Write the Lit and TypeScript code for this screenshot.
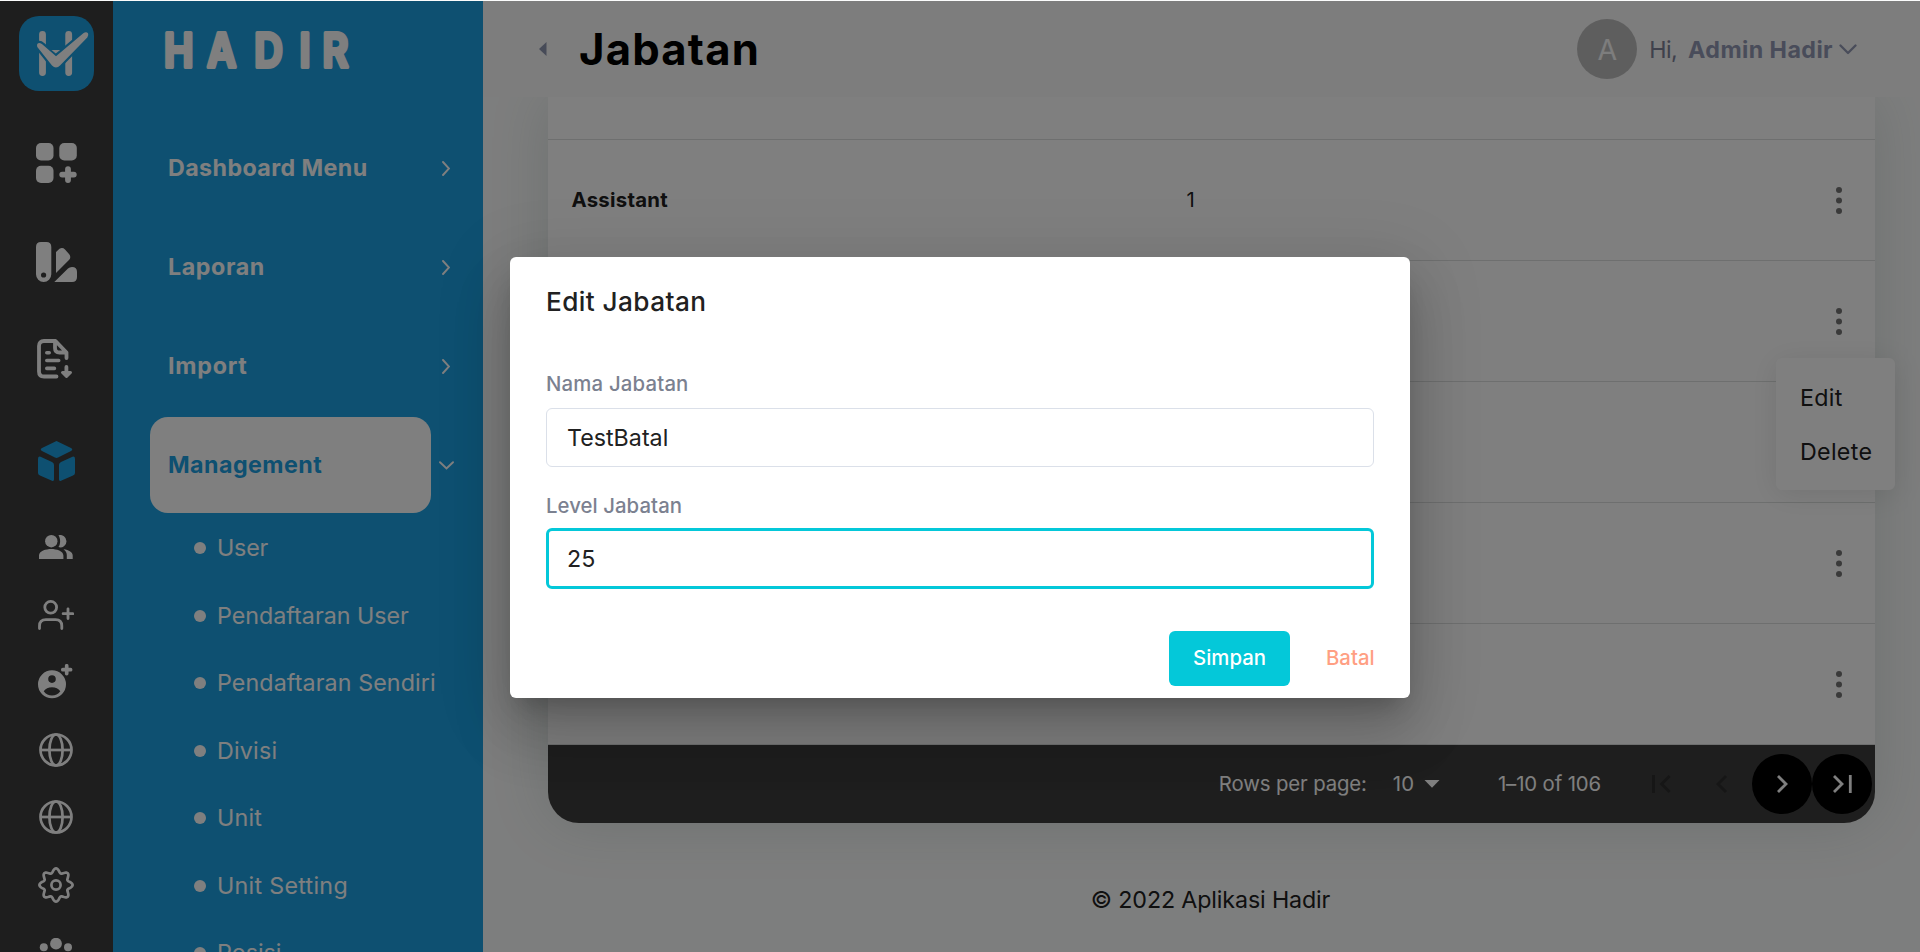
import { LitElement, html, css, svg, TemplateResult } from "lit";
import { customElement, property } from "lit/decorators.js";
import { classMap } from "lit/directives/class-map.js";

const gearPath = (() => {
  const pts: string[] = [];
  for (let i = 0; i < 160; i++) {
    const a = (i / 160) * Math.PI * 2;
    const r = 14.5 + 2.1 * Math.cos(8 * a);
    pts.push(`${(18 + r * Math.sin(a)).toFixed(2)} ${(18 - r * Math.cos(a)).toFixed(2)}`);
  }
  return `M${pts.join("L")}Z`;
})();

const globe = svg`<g fill="none" stroke="currentColor" stroke-width="2.7"><circle cx="17" cy="17" r="15.5"/><ellipse cx="17" cy="17" rx="6.6" ry="15.5"/><path d="M1.5 17h31"/></g>`;

const icons: Record<string, { w: number; h: number; body: TemplateResult }> = {
  logo: { w: 75, h: 75, body: svg`<rect width="75" height="75" rx="20" fill="#1ca1e3"/>
    <path d="M23.5 18.5V56.5M49.7 18.5V56.5" stroke="#fff" stroke-width="6.8" stroke-linecap="round"/>
    <path d="M18.3 31Q17.2 27 20.5 27Q22 27 23.5 28.5L37 40.3L64.3 17.3Q67.3 15.3 69 17.3Q70 19.5 68.3 21.5L41 49.5Q37 53.5 33 49.5Z" fill="#fff" stroke="#1ca1e3" stroke-width="4.4" paint-order="stroke"/>
    <path d="M32.500 34h8.600L36.800 37.400Z" fill="#fff"/>` },
  grid: { w: 41, h: 40, body: svg`<g fill="currentColor"><rect width="17.5" height="17.5" rx="5"/><rect x="23.3" width="17.5" height="17.5" rx="5"/><rect y="22.7" width="17.5" height="17.3" rx="5"/></g><path d="M32 26.2v10.8M26.2 31.6h11.6" stroke="currentColor" stroke-width="5.8" stroke-linecap="round"/>` },
  palette: { w: 41, h: 40, body: svg`<path fill="currentColor" fill-rule="evenodd" d="M5 0h5.3q5 0 5 5v27.3a7.65 7.65 0 0 1-15.3 0V5q0-5 5-5ZM7.6 30.4a2.6 2.6 0 1 0 0 5.2a2.6 2.6 0 0 0 0-5.2Z"/><path fill="currentColor" d="M20 10V31L33.2 17.8Q35.5 15 33 12L29 7.5Q26.5 5 23.5 6.8ZM18.3 40L32 26.5Q33.5 25 36 25Q41 25 41 30V35Q41 40 36 40Z"/>` },
  doc: { w: 39, h: 44, body: svg`<g fill="none" stroke="currentColor" stroke-width="3.8" stroke-linecap="round" stroke-linejoin="round"><path d="M29.5 19V13.5L18.5 2H7Q2 2 2 7V32.5Q2 37.5 7 37.5H19.5M18 2.5V9Q18 13.5 22.500 13.5H29"/><path stroke-width="3.6" d="M9.800 13.800h2.400M9.800 21.500h11.900M9.800 29.400h7.600"/></g><path d="M29.400 28v8" stroke="currentColor" stroke-width="3.800" stroke-linecap="round"/><path d="M25.500 33.500h8L29.500 37.500Z" fill="currentColor" stroke="currentColor" stroke-width="3" stroke-linejoin="round"/>` },
  cube: { w: 37, h: 40, body: svg`<path fill="currentColor" d="M18.500 0L33 7Q35.500 8.500 33 10L20 16.600Q18.500 17.300 17 16.600L4 10Q1.500 8.500 4 7ZM2.500 15.700L14 21Q16 22 16 24V38.500Q16 40.500 14 39.800L2 34.500Q0 33.500 0 32V18Q0 15 2.500 15.700ZM34.500 15.700L23 21Q21 22 21 24V38.500Q21 40.500 23 39.800L35 34.500Q37 33.500 37 32V18Q37 15 34.500 15.700Z"/>` },
  people: { w: 34, h: 24, body: svg`<g fill="currentColor"><circle cx="12.300" cy="6.200" r="6.200"/><path d="M19.400 .3A6.200 6.200 0 1 1 19.400 12.100C21.700 9 21.700 3.400 19.400 .3ZM0 24V20.500C0 16 7 14 12.200 14S24.400 16 24.400 20.500V24ZM24.500 14.300C30 15 33.700 17.500 33.700 20.500V24H27.800V20C27.800 17.700 26.500 15.700 24.500 14.300Z"/></g>` },
  userPlus: { w: 36, h: 30, body: svg`<g fill="none" stroke="currentColor" stroke-width="2.800"><circle cx="12.700" cy="7.300" r="5.900"/><path stroke-linecap="round" d="M1.500 28.500V26Q1.500 19.700 8 19.700H17.500Q23.800 19.700 23.800 26V28.500M30 8.800V18.600M25.100 13.700H34.900"/></g>` },
  circlePlus: { w: 36, h: 36, body: svg`<path fill="currentColor" fill-rule="evenodd" d="M14 6.300a14 14 0 1 0 0 28a14 14 0 0 0 0-28ZM14 11.300a3.800 3.800 0 1 1 0 7.600a3.800 3.800 0 0 1 0-7.600ZM5.700 27.200Q8.500 23.200 14 23.200T22.300 27.200Q19 31.500 14 31.500T5.700 27.200Z"/><path d="M28.700 1.800v7.800M24.800 5.700h7.800" stroke="currentColor" stroke-width="3.700" stroke-linecap="round"/>` },
  globe: { w: 34, h: 34, body: globe },
  gear: { w: 36, h: 36, body: svg`<path d=${gearPath} fill="none" stroke="currentColor" stroke-width="2.700"/><circle cx="18" cy="18" r="4.600" fill="none" stroke="currentColor" stroke-width="2.700"/>` },
  groups: { w: 34, h: 28, body: svg`<g fill="currentColor"><circle cx="17" cy="5.700" r="5.900"/><circle cx="4.800" cy="9.300" r="4"/><circle cx="29" cy="9.300" r="4"/><path d="M7 26q0-9 10-9t10 9Z"/></g>` },
  right: { w: 8, h: 15, body: svg`<path d="M1 1L7 7.500L1 14" fill="none" stroke="currentColor" stroke-width="1.900" stroke-linecap="round"/>` },
  down: { w: 15, h: 9, body: svg`<path d="M1 1.200L7.500 7.500L14 1.200" fill="none" stroke="currentColor" stroke-width="1.900" stroke-linecap="round"/>` },
  downBold: { w: 18, h: 11, body: svg`<path d="M1.500 1.500L9 9L16.500 1.500" fill="none" stroke="currentColor" stroke-width="2.300" stroke-linecap="round" stroke-linejoin="round"/>` },
  back: { w: 8, h: 14, body: svg`<path d="M7.500 0V14L0 7Z" fill="currentColor"/>` },
  kebab: { w: 6, h: 27, body: svg`<g fill="currentColor"><circle cx="3" cy="3" r="3"/><circle cx="3" cy="13.500" r="3"/><circle cx="3" cy="24" r="3"/></g>` },
  caret: { w: 16, h: 8, body: svg`<path d="M.5 0H15.500L8 7.700Z" fill="currentColor"/>` },
  first: { w: 19, h: 18, body: svg`<path d="M1.500 0V18M17.600 1L9.600 9L17.600 17" fill="none" stroke="currentColor" stroke-width="2.800"/>` },
  prev: { w: 11, h: 18, body: svg`<path d="M10 1L2 9L10 17" fill="none" stroke="currentColor" stroke-width="2.800"/>` },
  next: { w: 11, h: 18, body: svg`<path d="M1 1L9 9L1 17" fill="none" stroke="currentColor" stroke-width="2.800"/>` },
  last: { w: 19, h: 18, body: svg`<path d="M17.300 0V18M1 1L9 9L1 17" fill="none" stroke="currentColor" stroke-width="2.800"/>` },
};

@customElement("ui-icon")
class UiIcon extends LitElement {
  @property() name = "";
  static styles = css`
    :host { display: inline-flex; flex: none; }
    svg { display: block; }
  `;
  render() {
    const i = icons[this.name];
    return html`<svg width=${i.w} height=${i.h} viewBox="0 0 ${i.w} ${i.h}" fill="none">${i.body}</svg>`;
  }
}

const track = (v: number) => `letter-spacing:${v}px`;

@customElement("side-nav")
class SideNav extends LitElement {
  static styles = css`
    :host { display: flex; flex: none; height: 951px; overflow: hidden; color: #fff; }
    .rail { width: 113px; background: #3c3c3c; display: flex; flex-direction: column; align-items: center; flex: none; padding-right: 1px; box-sizing: border-box; }
    .logo { height: 112.5px; padding: 15px 0 0 1px; box-sizing: border-box; flex: none; }
    .big, .small { display: flex; align-items: center; justify-content: center; flex: none; }
    .big { height: 99px; padding-left: 1px; }
    .small { height: 67.5px; }
    .cube { color: #1ca1e3; height: 103px; box-sizing: border-box; padding-bottom: 3px; }
    .panel { width: 370px; background: #1ca1e3; flex: none; }
    .brand { height: 117.5px; display: block; }
    .brand text { font: 600 46.5px Inter, sans-serif; fill: #fff; stroke: #fff; stroke-width: 4.2px; stroke-linejoin: round; transform: scaleX(.85); }
    .item { height: 99px; display: flex; align-items: center; padding-left: 37px; font-weight: 700; font-size: 23.25px; }
    .label { width: 281px; height: 96px; line-height: 96px; padding-left: 18px; box-sizing: border-box; border-radius: 18px; }
    .active { background: #fff; color: #1ca1e3; }
    .chev { width: 30px; display: flex; justify-content: center; }
    .sub { height: 67.5px; display: flex; align-items: center; padding-left: 81px; gap: 11px; font-size: 23.25px; line-height: 30px; }
    .sub-text { padding-bottom: .5px; }
    .dot { width: 12px; height: 12px; border-radius: 50%; background: #fff; }
  `;
  render() {
    const menu: [string, number, boolean][] = [["Dashboard Menu", 0.4, false], ["Laporan", 0.6, false], ["Import", 0.75, false], ["Management", 0.44, true]];
    const subs: [string, number][] = [["User", -0.2], ["Pendaftaran User", 0], ["Pendaftaran Sendiri", 0.1], ["Divisi", 0.2], ["Unit", 0.2], ["Unit Setting", 0.28], ["Posisi", 0]];
    return html`
      <div class="rail">
        <div class="logo"><ui-icon name="logo"></ui-icon></div>
        ${["grid", "palette", "doc"].map((n) => html`<div class="big"><ui-icon name=${n}></ui-icon></div>`)}
        <div class="big cube"><ui-icon name="cube"></ui-icon></div>
        ${["people", "userPlus", "circlePlus", "globe", "globe", "gear", "groups"].map((n) => html`<div class="small"><ui-icon name=${n}></ui-icon></div>`)}
      </div>
      <div class="panel">
        <svg class="brand" width="370" height="117.5"><text x="60 111 166.200 219.500 246.500" y="66.300">HADIR</text></svg>
        ${menu.map(([t, ls, on]) => html`<div class="item"><div class=${classMap({ label: true, active: on })} style=${track(ls)}>${t}</div><div class="chev"><ui-icon name=${on ? "down" : "right"}></ui-icon></div></div>`)}
        ${subs.map(([t, ls]) => html`<div class="sub"><span class="dot"></span><span class="sub-text" style=${track(ls)}>${t}</span></div>`)}
      </div>`;
  }
}

@customElement("edit-dialog")
class EditDialog extends LitElement {
  static styles = css`
    :host { display: block; box-sizing: border-box; width: 900px; height: 441px; padding: 0 36px; background: #fff; border-radius: 6px; color: #212121;
      box-shadow: 0 16px 22px -10px rgba(0,0,0,.2), 0 36px 57px 4px rgba(0,0,0,.14), 0 13px 69px 12px rgba(0,0,0,.1); }
    .title { font-size: 26.2px; font-weight: 500; line-height: 89px; letter-spacing: .42px; }
    .label { font-size: 20.35px; font-weight: 450; line-height: 32px; margin: 22px 0 8px; color: #7b8190; letter-spacing: .18px; }
    .second { margin: 23px 0 6px; letter-spacing: .06px; }
    .field { box-sizing: border-box; height: 59px; border: 1px solid #dbe0e9; border-radius: 6px; padding-left: 20px; font-size: 23.25px; line-height: 57px; }
    .focus { height: 61px; border: 3px solid #04c8d9; padding-left: 18px; line-height: 55px; }
    .actions { display: flex; justify-content: flex-end; align-items: center; gap: 36px; margin-top: 42px; font-size: 20.35px; font-weight: 450; line-height: 54px; }
    .save { width: 121px; padding-bottom: 1px; text-align: center; background: #04c8d9; color: #fff; border-radius: 6px; }
    .cancel { width: 48px; padding-bottom: 1px; color: #ff9f83; letter-spacing: 0; }
  `;
  render() {
    return html`
      <div class="title">Edit Jabatan</div>
      <div class="label">Nama Jabatan</div>
      <div class="field">TestBatal</div>
      <div class="label second">Level Jabatan</div>
      <div class="field focus">25</div>
      <div class="actions"><span class="save">Simpan</span><span class="cancel">Batal</span></div>`;
  }
}

@customElement("app-root")
class AppRoot extends LitElement {
  static styles = css`
    :host { display: flex; position: relative; width: 1920px; height: 952px; box-sizing: border-box; padding-top: 1px; overflow: hidden; background: #fbfcfc; font-family: Inter, "Liberation Sans", sans-serif; color: #212121; }
    .main { flex: 1; display: flex; flex-direction: column; min-width: 0; }
    header { height: 96px; flex: none; display: flex; align-items: center; padding: 0 63px 0 56px; background: #fafafa; z-index: 1; }
    .back { color: #8f97b0; }
    h1 { margin: 0 auto 0 32px; padding-top: 2px; font-size: 43.6px; font-weight: 700; letter-spacing: 1.2px; color: #000; line-height: 1; }
    .avatar { width: 60px; height: 60px; border-radius: 50%; background: #bdbdbd; color: #fafafa; font-size: 28.5px; line-height: 62px; text-align: center; margin-right: 12px; }
    .hi { color: #7e8299; font-size: 23.25px; font-weight: 400; letter-spacing: -.6px; margin-right: 11px; padding-top: 1px; }
    .name { color: #9299b4; font-size: 23.25px; font-weight: 700; letter-spacing: .42px; margin-right: 6px; padding-top: 1px; }
    .user { display: flex; align-items: center; color: #9299b4; }
    .card { margin: 0 45px 0 65px; background: #fff; border-radius: 0 0 31px 31px; box-shadow: 0 0 60px rgba(40,80,65,.15); }
    .row { box-sizing: border-box; height: 121px; border-bottom: 1px solid #dcdfde; display: grid; grid-template-columns: 638.5px 1fr 39px; align-items: center; font-size: 20.35px; }
    .row.cut { height: 43px; }
    .row b, .row span { padding-bottom: 1px; }
    .row b { padding-left: 23.500px; letter-spacing: .25px; }
    .row ui-icon { color: #757575; }
    .pager { height: 78px; background: #3c3c3c; color: #fff; border-radius: 0 0 31px 31px; display: flex; align-items: center; justify-content: flex-end; padding-right: 3px; font-size: 20.35px; }
    .pager .rpp, .pager .ten, .pager .range { padding-bottom: 1px; }
    .rpp { letter-spacing: -.12px; margin-right: 26px; }
    .ten { margin-right: 10px; }
    .range { margin: 0 51px 0 58px; letter-spacing: -.13px; }
    .off { color: #2c2c2c; }
    .first { margin-right: 45px; }
    .prev { margin-right: 25px; }
    .btn { width: 60px; height: 60px; border-radius: 50%; background: #000; display: flex; align-items: center; justify-content: center; }
    footer { text-align: center; font-size: 23.25px; line-height: 30px; letter-spacing: -.14px; margin-top: 62px; padding-left: 18px; }
    .menu { position: absolute; left: 1776px; top: 358px; width: 119px; height: 132px; box-sizing: border-box; padding: 13px 0 11px 24px; background: #fff; border-radius: 6px; box-shadow: 0 4px 30px rgba(0,0,0,.1); font-size: 23.25px; line-height: 54px; letter-spacing: .3px; }
    .scrim { position: absolute; inset: 1px 0 0 0; background: rgba(0,0,0,.5); z-index: 2; display: flex; justify-content: center; align-items: flex-start; padding-top: 256px; }
  `;
  render() {
    return html`
      <side-nav></side-nav>
      <div class="main">
        <header>
          <ui-icon class="back" name="back"></ui-icon>
          <h1>Jabatan</h1>
          <div class="user"><div class="avatar">A</div><span class="hi">Hi,</span><span class="name">Admin Hadir</span><ui-icon name="downBold"></ui-icon></div>
        </header>
        <div class="card">
          <div class="row cut"></div>
          ${[["Assistant", "1"], ["", ""], ["", ""], ["", ""], ["", ""]].map(([n, l]) => html`<div class="row"><b>${n}</b><span>${l}</span><ui-icon name="kebab"></ui-icon></div>`)}
          <div class="pager">
            <span class="rpp">Rows per page:</span><span class="ten">10</span><ui-icon name="caret"></ui-icon>
            <span class="range">1–10 of 106</span>
            <ui-icon class="off first" name="first"></ui-icon><ui-icon class="off prev" name="prev"></ui-icon>
            <span class="btn"><ui-icon name="next"></ui-icon></span><span class="btn"><ui-icon name="last"></ui-icon></span>
          </div>
        </div>
        <footer>© 2022 Aplikasi Hadir</footer>
      </div>
      <div class="menu"><div>Edit</div><div>Delete</div></div>
      <div class="scrim"><edit-dialog></edit-dialog></div>`;
  }
}
